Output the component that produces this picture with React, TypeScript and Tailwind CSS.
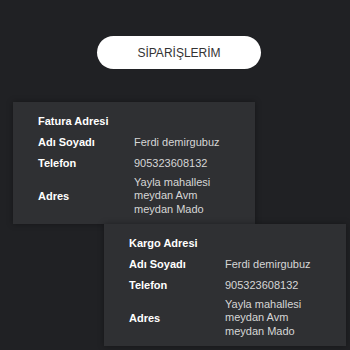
import React from "react";

type Address = {
  title: string;
  name: string;
  phone: string;
  address: string[];
};

const fatura: Address = {
  title: "Fatura Adresi",
  name: "Ferdi demirgubuz",
  phone: "905323608132",
  address: ["Yayla mahallesi", "meydan Avm", "meydan Mado"],
};

const kargo: Address = { ...fatura, title: "Kargo Adresi" };

function AddressCard({ data, className }: { data: Address; className?: string }) {
  return (
    <div
      className={
        "w-[242px] bg-[#2f3033] pt-[8px] pb-[6px] pl-[25px] text-[11px] shadow-[0_0_6px_rgba(0,0,0,0.35)] " +
        (className || "")
      }
    >
      <div className="h-[22px] flex items-center font-bold text-white">{data.title}</div>
      <div className="h-[21px] flex items-center">
        <span className="w-[96px] font-bold text-white">Adı Soyadı</span>
        <span className="text-[#d6d6d6]">{data.name}</span>
      </div>
      <div className="h-[21px] flex items-center">
        <span className="w-[96px] font-bold text-white">Telefon</span>
        <span className="text-[#d6d6d6]">{data.phone}</span>
      </div>
      <div className="h-[44px] flex items-center">
        <span className="w-[96px] font-bold text-white">Adres</span>
        <div className="flex flex-col leading-[13.5px] text-[#d6d6d6]">
          {data.address.map((line) => (
            <span key={line}>{line}</span>
          ))}
        </div>
      </div>
    </div>
  );
}

export default function App() {
  return (
    <div
      className="w-[350px] h-[350px] bg-[#202124] overflow-hidden pt-[36px] pl-[13px]"
      style={{ fontFamily: '"Liberation Sans", Arial, sans-serif' }}
    >
      <div className="ml-[84px] w-[164px] h-[33px] rounded-full bg-white flex items-center justify-center text-[12px] text-[#333]">
        SİPARİŞLERİM
      </div>
      <div className="mt-[33px] flex flex-col">
        <AddressCard data={fatura} />
        <AddressCard data={kargo} className="ml-[91px] w-[241px]" />
      </div>
    </div>
  );
}
